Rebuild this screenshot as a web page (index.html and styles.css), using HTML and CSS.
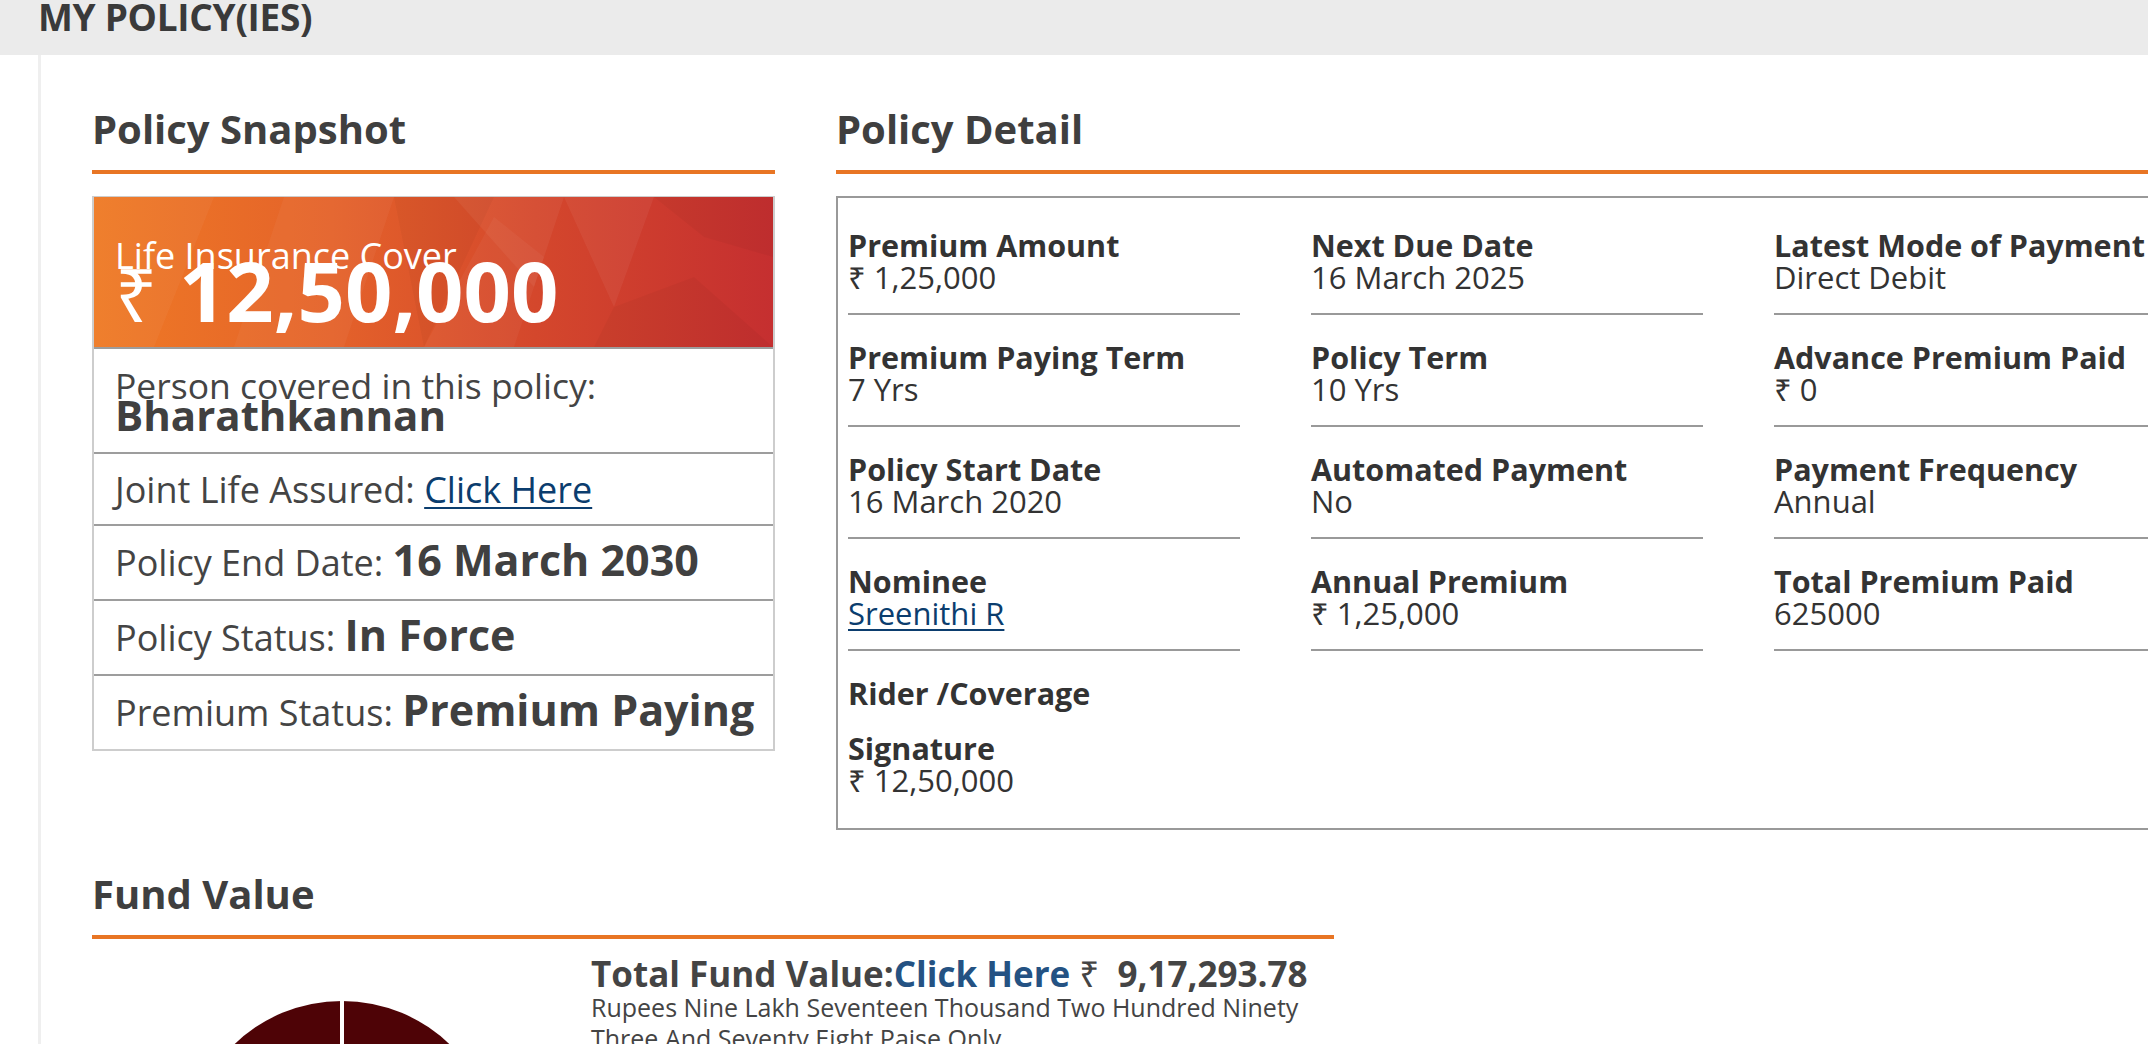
FILE: index.html
```html
<!DOCTYPE html>
<html lang="en">
<head>
<meta charset="utf-8">
<title>My Policies</title>
<link rel="stylesheet" href="styles.css">
</head>
<body>
<header class="topbar">
  <h1 class="page-title">MY POLICY(IES)</h1>
</header>
<main class="main">
  <div class="top-row">
    <section class="col-snapshot">
      <h2 class="section-title">Policy Snapshot</h2>
      <div class="snapshot-card">
        <div class="cover-banner">
          <svg class="banner-pattern" viewBox="0 0 679 150" preserveAspectRatio="none" aria-hidden="true">
            <polygon points="0,0 120,0 60,150 0,150" fill="#ffffff" opacity="0.04"/>
            <polygon points="190,0 300,0 250,150 140,150" fill="#ffffff" opacity="0.04"/>
            <polygon points="300,0 400,0 330,150" fill="#000000" opacity="0.03"/>
            <polygon points="360,0 470,0 440,90" fill="#ffffff" opacity="0.05"/>
            <polygon points="400,20 450,60 420,150 330,150" fill="#ffffff" opacity="0.04"/>
            <polygon points="470,0 560,0 520,110" fill="#ffffff" opacity="0.05"/>
            <polygon points="520,110 600,80 679,150 500,150" fill="#000000" opacity="0.03"/>
            <polygon points="560,0 679,0 679,60 610,40" fill="#000000" opacity="0.03"/>
          </svg>
          <div class="cover-label">Life Insurance Cover</div>
          <div class="cover-amount"><span class="rupee">₹</span> 12,50,000</div>
        </div>
        <div class="snap-person">
          <div class="person-label">Person covered in this policy:</div>
          <div class="person-name">Bharathkannan</div>
        </div>
        <div class="snap-row snap-row-short">Joint Life Assured: <a class="link" href="#">Click Here</a></div>
        <div class="snap-row">Policy End Date: <strong class="snap-strong">16 March 2030</strong></div>
        <div class="snap-row">Policy Status: <strong class="snap-strong">In Force</strong></div>
        <div class="snap-row">Premium Status: <strong class="snap-strong">Premium Paying</strong></div>
      </div>
    </section>

    <section class="col-detail">
      <h2 class="section-title">Policy Detail</h2>
      <div class="detail-box">
        <div class="detail-grid">
          <div class="detail-item"><div class="d-label">Premium Amount</div><div class="d-value">₹ 1,25,000</div></div>
          <div class="detail-item"><div class="d-label">Next Due Date</div><div class="d-value">16 March 2025</div></div>
          <div class="detail-item"><div class="d-label">Latest Mode of Payment</div><div class="d-value">Direct Debit</div></div>

          <div class="detail-item"><div class="d-label">Premium Paying Term</div><div class="d-value">7 Yrs</div></div>
          <div class="detail-item"><div class="d-label">Policy Term</div><div class="d-value">10 Yrs</div></div>
          <div class="detail-item"><div class="d-label">Advance Premium Paid</div><div class="d-value">₹ 0</div></div>

          <div class="detail-item"><div class="d-label">Policy Start Date</div><div class="d-value">16 March 2020</div></div>
          <div class="detail-item"><div class="d-label">Automated Payment</div><div class="d-value">No</div></div>
          <div class="detail-item"><div class="d-label">Payment Frequency</div><div class="d-value">Annual</div></div>

          <div class="detail-item"><div class="d-label">Nominee</div><div class="d-value"><a class="link" href="#">Sreenithi R</a></div></div>
          <div class="detail-item"><div class="d-label">Annual Premium</div><div class="d-value">₹ 1,25,000</div></div>
          <div class="detail-item"><div class="d-label">Total Premium Paid</div><div class="d-value">625000</div></div>

          <div class="detail-item plain rider"><div class="d-label">Rider /Coverage</div></div>
          <div class="detail-item plain signature"><div class="d-label">Signature</div><div class="d-value">₹ 12,50,000</div></div>
        </div>
      </div>
    </section>
  </div>

  <section class="fund">
    <h2 class="section-title">Fund Value</h2>
    <div class="fund-body">
      <div class="pie-col">
        <svg class="pie" viewBox="0 0 312 312" aria-hidden="true">
          <circle cx="156" cy="156" r="156" fill="#4e0306"/>
          <line x1="156" y1="0" x2="156" y2="156" stroke="#ffffff" stroke-width="4"/>
          <line x1="156" y1="156" x2="20" y2="236" stroke="#ffffff" stroke-width="4"/>
        </svg>
      </div>
      <div class="fund-text">
        <div class="fund-total">Total Fund Value:<a class="fund-link" href="#">Click Here</a> <span class="fund-rupee">₹</span>&nbsp; 9,17,293.78</div>
        <div class="fund-words">Rupees Nine Lakh Seventeen Thousand Two Hundred Ninety Three And Seventy Eight Paise Only</div>
      </div>
    </div>
  </section>
</main>
</body>
</html>
```

FILE: styles.css
```css
html, body {
  overflow: hidden;
}

body {
  margin: 0;
  font-family: "Open Sans", "Noto Sans", "DejaVu Sans", sans-serif;
  color: #444444;
  background: #ffffff;
}

.topbar {
  height: 55px;
  background: #ebebeb;
  padding-left: 38px;
}

.page-title {
  margin: 0;
  font-size: 37px;
  font-weight: 700;
  line-height: 33px;
  color: #3a3a3a;
  letter-spacing: -0.3px;
}

.main {
  margin-left: 38px;
  border-left: 3px solid #efefef;
  padding: 50px 0 0 51px;
  min-height: 1000px;
}

.top-row {
  display: flex;
  gap: 61px;
  align-items: flex-start;
}

.col-snapshot {
  width: 683px;
  flex-shrink: 0;
}

.col-detail {
  width: 1427px;
  flex-shrink: 0;
}

.section-title {
  margin: 0 0 22px;
  font-size: 40px;
  font-weight: 700;
  line-height: 48px;
  color: #3f3f3f;
  padding-bottom: 17px;
  border-bottom: 4px solid #e87524;
}

/* ---------- Snapshot card ---------- */

.snapshot-card {
  border: 2px solid #cdcdcd;
  border-top-width: 1px;
}

.cover-banner {
  position: relative;
  height: 150px;
  box-sizing: border-box;
  padding: 42px 21px 0;
  color: #ffffff;
  overflow: hidden;
  background: linear-gradient(90deg, #ef7a25 0%, #e4622a 35%, #d4472c 65%, #c52f30 100%);
}

.banner-pattern {
  position: absolute;
  left: 0;
  top: 0;
  width: 100%;
  height: 100%;
}

.cover-label {
  position: relative;
  font-size: 36px;
  line-height: 34px;
  font-weight: 400;
}

.cover-amount {
  position: relative;
  margin-top: -13px;
  font-size: 83px;
  line-height: 60px;
  font-weight: 700;
}

.rupee {
  font-weight: 400;
  font-size: 74px;
}

.snap-person {
  border-top: 2px solid #9d9d9d;
  padding: 18px 21px 22px;
  color: #444444;
}

.person-label {
  font-size: 35.5px;
  line-height: 36px;
}

.person-name {
  margin-top: -3px;
  font-size: 42px;
  line-height: 30px;
  font-weight: 700;
  color: #404040;
}

.snap-row {
  border-top: 2px solid #9d9d9d;
  padding: 0 21px;
  height: 73px;
  line-height: 73px;
  font-size: 36px;
  white-space: nowrap;
  color: #444444;
}

.snap-row-short {
  height: 70px;
  line-height: 72px;
}

.snap-strong {
  font-size: 43px;
  line-height: 1;
  font-weight: 700;
  color: #404040;
}

.link {
  color: #0b3d6e;
  text-decoration: underline;
  text-underline-offset: 4px;
  text-decoration-thickness: 2px;
}

/* ---------- Detail box ---------- */

.detail-box {
  border: 2px solid #999999;
  padding: 5px 0 32px 10px;
}

.detail-grid {
  display: grid;
  grid-template-columns: 392px 392px 392px;
  column-gap: 71px;
}

.detail-item {
  padding: 26px 0 20px;
  border-bottom: 2px solid #999999;
  color: #333333;
}

.detail-item.plain {
  border-bottom: none;
  padding-bottom: 0;
}

.detail-item.signature {
  grid-column: 1;
  padding-top: 23px;
}

.d-label {
  font-size: 30.5px;
  line-height: 32px;
  font-weight: 700;
  white-space: nowrap;
  color: #333333;
}

.d-value {
  font-size: 31px;
  line-height: 32px;
  font-weight: 400;
  white-space: nowrap;
  color: #333333;
}

/* ---------- Fund value ---------- */

.fund {
  width: 1242px;
  margin-top: 40px;
}

.fund .section-title {
  margin-bottom: 0;
}

.fund-body {
  display: flex;
}

.pie-col {
  width: 499px;
  flex-shrink: 0;
  display: flex;
  justify-content: center;
  padding-top: 62px;
}

.pie {
  width: 312px;
  height: 312px;
  display: block;
}

.fund-text {
  padding-top: 16px;
  width: 730px;
}

.fund-total {
  font-size: 35px;
  line-height: 37px;
  font-weight: 700;
  color: #444444;
  white-space: nowrap;
}

.fund-link {
  color: #245283;
  text-decoration: none;
}

.fund-rupee {
  font-weight: 400;
}

.fund-words {
  font-size: 25px;
  line-height: 31px;
  color: #444444;
}
```
